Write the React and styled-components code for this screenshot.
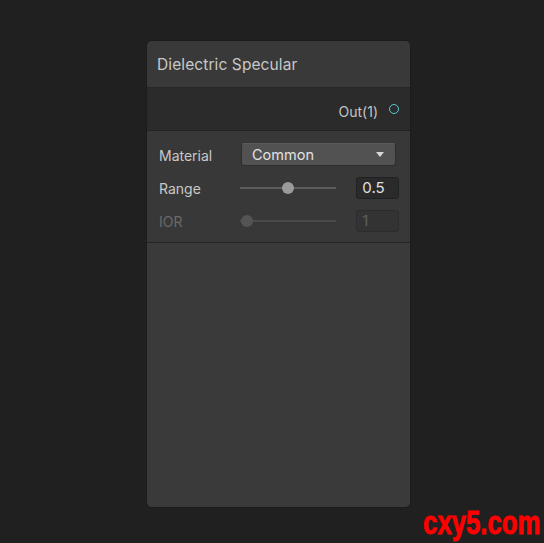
import React from 'react';
import styled, { createGlobalStyle } from 'styled-components';

const GlobalStyle = createGlobalStyle`
  html, body {
    margin: 0;
    padding: 0;
    background: #202020;
    font-family: Inter, "Noto Sans", sans-serif;
  }
`;

const Canvas = styled.div`
  position: relative;
  width: 544px;
  height: 543px;
  padding: 40px 0 0 146px;
  box-sizing: border-box;
`;

const Node = styled.div`
  width: 265px;
  height: 468px;
  box-sizing: border-box;
  border: 1px solid #1c1c1c;
  border-radius: 6px;
  background: #3a3a3a;
  display: flex;
  flex-direction: column;
  overflow: hidden;
`;

const Title = styled.div`
  height: 46px;
  display: flex;
  align-items: center;
  padding-left: 10px;
  font-size: 15.5px;
  letter-spacing: 0.1px;
  color: #c8c8c8;
  background: #393939;
  border-bottom: 1px solid #262626;
`;

const Outputs = styled.div`
  height: 42px;
  display: flex;
  align-items: center;
  justify-content: flex-end;
  gap: 11px;
  padding-right: 11px;
  background: #2b2b2b;
  border-bottom: 1px solid #232323;
  font-size: 14px;
  color: #c4c4c4;
`;

const OutLabel = styled.span`
  margin-top: 4px;
`;

const Port = styled.span`
  width: 8px;
  height: 8px;
  border-radius: 50%;
  border: 1.2px solid #5ec7cf;
`;

const Inputs = styled.div`
  display: flex;
  flex-direction: column;
  gap: 10px;
  padding: 12px 11px 10px 12px;
  background: #383838;
  border-bottom: 1px solid #242424;
`;

const Row = styled.div`
  height: 23px;
  display: flex;
  align-items: center;
`;

const Label = styled.div`
  width: 82px;
  font-size: 14px;
  padding-top: 1px;
  color: ${p => (p.$disabled ? '#6a6a6a' : '#c8c8c8')};
`;

const Dropdown = styled.div`
  width: 155px;
  height: 23px;
  box-sizing: border-box;
  display: flex;
  align-items: center;
  justify-content: space-between;
  padding: 0 11px 0 10px;
  background: #525252;
  border: 1px solid #2e2e2e;
  border-top-color: #5a5a5a;
  border-radius: 3px;
  font-size: 14.5px;
  color: #e2e2e2;
`;

const Caret = styled.span`
  width: 0;
  height: 0;
  border-left: 4px solid transparent;
  border-right: 4px solid transparent;
  border-top: 5px solid #d8d8d8;
`;

const Slider = styled.div`
  position: relative;
  width: 97px;
  height: 12px;
  margin-right: 20px;
  display: flex;
  align-items: center;
`;

const Track = styled.div`
  width: 100%;
  height: 2px;
  background: ${p => (p.$disabled ? '#4a4a4a' : '#5e5e5e')};
`;

const Thumb = styled.div`
  position: absolute;
  top: 0;
  width: 12px;
  height: 12px;
  margin-left: -6px;
  border-radius: 50%;
  background: ${p => (p.$disabled ? '#545454' : '#9a9a9a')};
`;

const NumberField = styled.div`
  width: 43px;
  height: 22px;
  box-sizing: border-box;
  display: flex;
  align-items: center;
  padding-left: 5px;
  background: ${p => (p.$disabled ? '#333333' : '#2a2a2a')};
  border: 1px solid ${p => (p.$disabled ? '#2c2c2c' : '#212121')};
  border-radius: 3px;
  font-size: 15px;
  color: ${p => (p.$disabled ? '#5e5e5e' : '#e0e0e0')};
`;

const Body = styled.div`
  flex: 1;
  background: #3a3a3a;
`;

const Watermark = styled.div`
  position: absolute;
  right: 4px;
  bottom: 1px;
  font-family: "Liberation Sans", Arial, sans-serif;
  font-weight: bold;
  font-size: 33px;
  color: #ff0000;
  -webkit-text-stroke: 0.8px #ff0000;
  transform: scaleX(0.78);
  transform-origin: right bottom;
`;

function SliderRow({ label, value, pos, disabled }) {
  return (
    <Row>
      <Label $disabled={disabled}>{label}</Label>
      <Slider>
        <Track $disabled={disabled} />
        <Thumb $disabled={disabled} style={{ left: `${pos * 100}%` }} />
      </Slider>
      <NumberField $disabled={disabled}>{value}</NumberField>
    </Row>
  );
}

export default function App() {
  return (
    <Canvas>
      <GlobalStyle />
      <Node>
        <Title>Dielectric Specular</Title>
        <Outputs>
          <OutLabel>Out(1)</OutLabel>
          <Port />
        </Outputs>
        <Inputs>
          <Row>
            <Label>Material</Label>
            <Dropdown>
              Common
              <Caret />
            </Dropdown>
          </Row>
          <SliderRow label="Range" value="0.5" pos={0.5} />
          <SliderRow label="IOR" value="1" pos={0.07} disabled />
        </Inputs>
        <Body />
      </Node>
      <Watermark>cxy5.com</Watermark>
    </Canvas>
  );
}
